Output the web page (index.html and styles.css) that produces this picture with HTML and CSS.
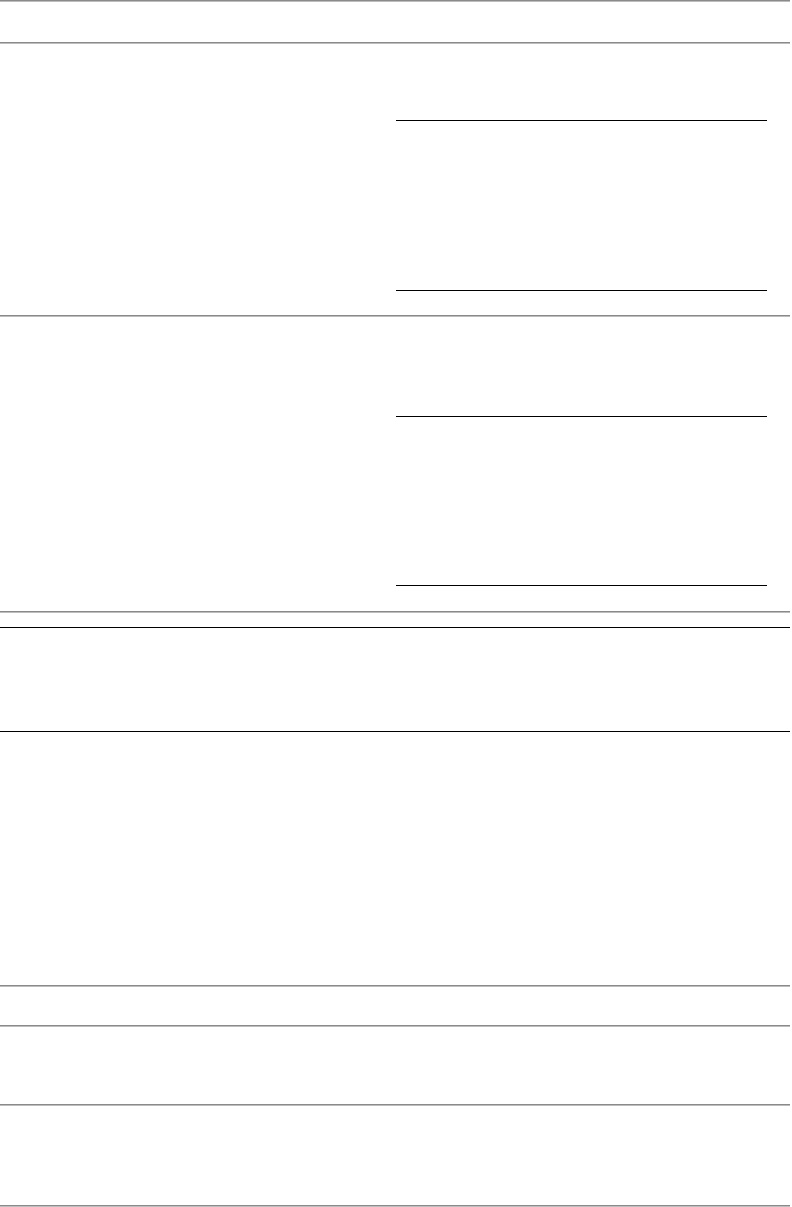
FILE: index.html
```html
<!DOCTYPE html>
<html lang="en">
<head>
    <meta charset="UTF-8">
    <meta name="viewport" content="width=device-width, initial-scale=1.0">
    <title>Form</title>
    <link rel="stylesheet" href="styles.css">
</head>
<body>
    <div class="page">
        <hr class="rule">
        <div class="header"></div>
        <hr class="rule">

        <div class="section section-one">
            <div class="col-left"></div>
            <div class="col-right">
                <div class="field-box box-one"></div>
            </div>
        </div>
        <hr class="rule">

        <div class="section section-two">
            <div class="col-left"></div>
            <div class="col-right">
                <div class="field-box box-two"></div>
            </div>
        </div>
        <hr class="rule">

        <div class="gap gap-a"></div>
        <div class="wide-box"></div>
        <div class="gap gap-b"></div>
        <hr class="rule">
        <div class="gap gap-c"></div>
        <hr class="rule">
        <div class="gap gap-d"></div>
        <hr class="rule">
        <div class="gap gap-e"></div>
        <hr class="rule">
    </div>
</body>
</html>
```

FILE: styles.css
```css
body {
    margin: 0;
    font-family: "Liberation Sans", Arial, sans-serif;
    background-color: #ffffff;
}
.page {
    width: 790px;
}
.rule {
    margin: 0;
    height: 0;
    border: 0;
    border-top: 1px solid #8a8a8a;
    border-bottom: 1px solid #bdbdbd;
}
.header {
    height: 40px;
}
.section {
    display: flex;
}
.section-one {
    height: 271px;
}
.section-two {
    height: 294px;
}
.col-left {
    width: 396px;
}
.col-right {
    width: 371px;
}
.field-box {
    border-top: 1px solid #000;
    border-bottom: 1px solid #000;
}
.box-one {
    margin-top: 76px;
    height: 169px;
}
.box-two {
    margin-top: 99px;
    height: 168px;
}
.wide-box {
    height: 103px;
    border-top: 1px solid #000;
    border-bottom: 1px solid #000;
}
.gap-a {
    height: 14px;
}
.gap-b {
    height: 253px;
}
.gap-c {
    height: 38px;
}
.gap-d {
    height: 77px;
}
.gap-e {
    height: 99px;
}
```
